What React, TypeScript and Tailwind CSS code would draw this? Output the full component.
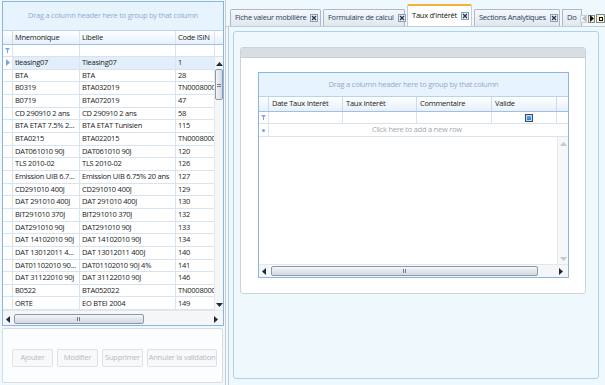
import React from "react";

const rows: [string, string, string][] = [
  ["tleasing07", "Tleasing07", "1"],
  ["BTA", "BTA", "28"],
  ["B0319", "BTA032019", "TN0008000000"],
  ["B0719", "BTA072019", "47"],
  ["CD 290910 2 ans", "CD 290910 2 ans", "58"],
  ["BTA ETAT 7.5% 2...", "BTA ETAT Tunisien", "115"],
  ["BTA0215", "BTA022015", "TN0008000000"],
  ["DAT061010 90J", "DAT061010 90J", "120"],
  ["TLS 2010-02", "TLS 2010-02", "126"],
  ["Emission UIB 6.7...", "Emission UIB 6.75% 20 ans", "127"],
  ["CD291010 400J", "CD291010 400J", "129"],
  ["DAT 291010 400J", "DAT 291010 400J", "130"],
  ["BIT291010 370J", "BIT291010 370J", "132"],
  ["DAT291010 90J", "DAT291010 90J", "133"],
  ["DAT 14102010 90J", "DAT 14102010 90J", "134"],
  ["DAT 13012011 4...", "DAT 13012011 400J", "140"],
  ["DAT01102010 90...", "DAT01102010 90J 4%", "141"],
  ["DAT 31122010 90J", "DAT 31122010 90J", "146"],
  ["B0522", "BTA052022", "TN0008000000"],
  ["ORTE", "EO BTEI 2004", "149"],
];

function Funnel() {
  return (
    <svg width="5" height="5" viewBox="0 0 5 5">
      <path d="M0 0H5L3 2.2V5H2V2.2Z" fill="#7fa6d6" />
    </svg>
  );
}

function Arrow({ dir, color = "#1e2b3c" }: { dir: "up" | "down" | "left" | "right"; color?: string }) {
  const d = {
    up: "M0 4L3.5 0L7 4Z",
    down: "M0 0L7 0L3.5 4Z",
    left: "M4 0V7L0 3.5Z",
    right: "M0 0V7L4 3.5Z",
  }[dir];
  const vertical = dir === "up" || dir === "down";
  return (
    <svg width={vertical ? 7 : 4} height={vertical ? 4 : 7} viewBox={vertical ? "0 0 7 4" : "0 0 4 7"}>
      <path d={d} fill={color} />
    </svg>
  );
}

function CloseBox() {
  return (
    <span className="inline-flex shrink-0 items-center justify-center w-[8px] h-[8px] border border-[#8e9db1] bg-[#eef2f7] ml-auto">
      <svg width="6" height="6" viewBox="0 0 6 6">
        <path d="M1 1L5 5M5 1L1 5" stroke="#1f3552" strokeWidth="1.3" />
      </svg>
    </span>
  );
}

function HScroll({ thumbLeft, thumbWidth, tall }: { thumbLeft: number; thumbWidth: number; tall?: boolean }) {
  return (
    <div
      className={`${tall ? "h-[15px] pt-[2px]" : "h-[13px]"} shrink-0 flex items-center bg-[#f4f6f8] border-t border-[#e3e8ee]`}
    >
      <div className="w-[10px] flex justify-center">
        <Arrow dir="left" />
      </div>
      <div className="flex-1 relative h-[10px]">
        <div
          className="absolute top-0 bottom-0 rounded-[2px] border border-[#8d99a8] bg-gradient-to-b from-[#f3f5f8] to-[#d3d9e1] flex items-center justify-center"
          style={{ left: thumbLeft, width: thumbWidth }}
        >
          <div className="w-[4px] h-[4px] bg-[repeating-linear-gradient(90deg,#6f7c8c_0,#6f7c8c_1px,transparent_1px,transparent_2px)]" />
        </div>
      </div>
      <div className="w-[14px] flex justify-center">
        <Arrow dir="right" />
      </div>
    </div>
  );
}

function LeftGrid() {
  const cell = "border-r border-[#d6e3f1] px-[2px] overflow-hidden whitespace-nowrap flex items-center";
  return (
    <div className="flex flex-col w-[222px] h-[325px] border border-[#8db4e0] bg-white">
      <div className="h-[29px] shrink-0 bg-[#e8f4fd] border-b border-[#b9d3ef] flex items-center justify-center text-[#8eaad0]">
        Drag a column header here to group by that column
      </div>
      <div className="h-[14px] shrink-0 flex border-b border-[#9fc0e6] bg-gradient-to-b from-white to-[#e6f0fb] text-[#1c1c1c]">
        <div className="w-[10px] border-r border-[#c9dbef]" />
        <div className={`w-[67px] ${cell} border-[#c9dbef]`}>Mnemonique</div>
        <div className={`w-[96px] ${cell} border-[#c9dbef]`}>Libelle</div>
        <div className={`w-[39px] ${cell} border-[#c9dbef]`}>Code ISIN</div>
        <div className="flex-1" />
      </div>
      <div className="h-[12px] shrink-0 flex border-b border-[#d6e3f1]">
        <div className="w-[10px] border-r border-[#d6e3f1] flex items-center justify-center">
          <Funnel />
        </div>
        <div className="w-[67px] border-r border-[#d6e3f1]" />
        <div className="w-[96px] border-r border-[#d6e3f1]" />
        <div className="w-[39px] border-r border-[#d6e3f1]" />
      </div>
      <div className="flex-1 flex min-h-0">
        <div className="w-[212px] overflow-hidden">
          {rows.map((r, i) => (
            <div
              key={i}
              className={`h-[12.67px] flex border-b border-[#d6e3f1] text-[#1a1a1a] ${i === 0 ? "bg-[#e2effb]" : ""}`}
            >
              <div className="w-[10px] shrink-0 border-r border-[#d6e3f1] flex items-center justify-center bg-white">
                {i === 0 && <Arrow dir="right" color="#7ea4d4" />}
              </div>
              <div className={`w-[67px] shrink-0 ${cell}`}>{r[0]}</div>
              <div className={`w-[96px] shrink-0 ${cell}`}>{r[1]}</div>
              <div className={`w-[39px] shrink-0 ${cell}`}>{r[2]}</div>
            </div>
          ))}
        </div>
        <div className="flex-1 flex flex-col items-center bg-[#f4f6f8] border-l border-[#e3e8ee]">
          <div className="h-[10px] flex items-center mt-[2px]">
            <Arrow dir="up" />
          </div>
          <div className="w-[8px] h-[31px] rounded-[2px] border border-[#8d99a8] bg-gradient-to-r from-[#f3f5f8] to-[#d3d9e1] flex items-center justify-center">
            <div className="w-[4px] h-[4px] bg-[repeating-linear-gradient(0deg,#6f7c8c_0,#6f7c8c_1px,transparent_1px,transparent_2px)]" />
          </div>
          <div className="flex-1" />
          <div className="h-[8px] flex items-center mb-[1px]">
            <Arrow dir="down" />
          </div>
        </div>
      </div>
      <HScroll thumbLeft={1} thumbWidth={130} tall />
    </div>
  );
}

function Button({ label, w }: { label: string; w: string }) {
  return (
    <div className={`${w} h-[18px] border border-[#dde2e8] rounded-[2px] bg-[#f7f9fb] text-[#b6bcc4] flex items-center justify-center whitespace-nowrap`}>
      {label}
    </div>
  );
}

function Tab({ label, selected, w }: { label: string; selected?: boolean; w: string }) {
  return (
    <div
      className={`${w} flex items-center gap-[4px] px-[4px] border border-b-0 rounded-t-[2px] whitespace-nowrap ${
        selected
          ? "h-[22px] bg-white border-[#c6ccd4] border-t-2 border-t-[#f4b13a] text-[#111]"
          : "h-[17px] bg-gradient-to-b from-[#f5f8fb] to-[#dfe7f0] border-[#a9b8ca] text-[#2c3e55]"
      }`}
    >
      <span>{label}</span>
      <CloseBox />
    </div>
  );
}

function InnerGrid() {
  const col = "border-r border-[#c9dbef] px-[3px] flex items-center whitespace-nowrap";
  return (
    <div className="w-[311px] h-[206px] flex flex-col border border-[#8db4e0] bg-white">
      <div className="h-[24px] shrink-0 bg-[#e8f4fd] border-b border-[#b9d3ef] flex items-center justify-center text-[#8eaad0]">
        Drag a column header here to group by that column
      </div>
      <div className="h-[15px] shrink-0 flex border-b border-[#9fc0e6] bg-gradient-to-b from-white to-[#e6f0fb] text-[#1c1c1c]">
        <div className="w-[10px] border-r border-[#c9dbef]" />
        <div className={`w-[74px] ${col}`}>Date Taux Interêt</div>
        <div className={`w-[74px] ${col}`}>Taux Interêt</div>
        <div className={`w-[75px] ${col}`}>Commentaire</div>
        <div className={`w-[65px] ${col}`}>Valide</div>
      </div>
      <div className="h-[12px] shrink-0 flex border-b border-[#d6e3f1]">
        <div className="w-[10px] border-r border-[#d6e3f1] flex items-center justify-center">
          <Funnel />
        </div>
        <div className="w-[74px] border-r border-[#d6e3f1]" />
        <div className="w-[74px] border-r border-[#d6e3f1]" />
        <div className="w-[75px] border-r border-[#d6e3f1]" />
        <div className="w-[65px] border-r border-[#d6e3f1] flex items-center pl-[33px]">
          <div className="w-[8px] h-[8px] border border-[#3c4c60] bg-[#c9d6e6] p-[1px]">
            <div className="w-full h-full bg-gradient-to-b from-[#63aef0] to-[#2f7fd0]" />
          </div>
        </div>
      </div>
      <div className="h-[13px] shrink-0 flex border-b border-[#d6e3f1]">
        <div className="w-[10px] border-r border-[#d6e3f1] flex items-center justify-center">
          <span className="w-[3px] h-[3px] rounded-full bg-[#7fa6d6]" />
        </div>
        <div className="flex-1 flex items-center pl-[103px] text-[#a3a8ae]">Click here to add a new row</div>
      </div>
      <div className="flex-1 flex min-h-0">
        <div className="w-[298px]" />
        <div className="flex-1 flex flex-col items-center bg-[#f6f7f9] border-l border-[#e6eaef]">
          <div className="h-[10px] flex items-center mt-[2px]">
            <Arrow dir="up" color="#c3c8cf" />
          </div>
          <div className="flex-1" />
          <div className="h-[8px] flex items-center mb-[1px]">
            <Arrow dir="down" color="#c3c8cf" />
          </div>
        </div>
      </div>
      <HScroll thumbLeft={2} thumbWidth={267} />
    </div>
  );
}

export default function App() {
  return (
    <div
      className="w-[605px] h-[385px] flex bg-[#eff9fd] overflow-hidden text-[7.5px] tracking-[-0.25px] leading-none"
      style={{ fontFamily: '"Open Sans", "Noto Sans", sans-serif' }}
    >
      <div className="w-[226px] shrink-0 border-r border-[#c8ced6] pt-[1px] pl-[2px] flex flex-col">
        <LeftGrid />
        <div className="mt-[2px] w-[221px] h-[55px] border border-[#d6dce3] rounded-[2px] bg-[#fbfdfe] flex gap-[4px] pt-[20px] pl-[9px]">
          <Button label="Ajouter" w="w-[41px]" />
          <Button label="Modifier" w="w-[41px]" />
          <Button label="Supprimer" w="w-[41px]" />
          <Button label="Annuler la validation" w="w-[70px]" />
        </div>
      </div>
      <div className="flex-1 flex flex-col min-w-0">
        <div className="h-[27px] shrink-0 flex items-end pl-[4px] gap-[2px] border-b border-[#c2cad4] relative">
          <Tab label="Fiche valeur mobilière" w="w-[91px]" />
          <Tab label="Formulaire de calcul" w="w-[82px]" />
          <Tab label="Taux d'intérêt" selected w="w-[65px]" />
          <Tab label="Sections Analytiques" w="w-[86px]" />
          <div className="w-[20px] h-[17px] overflow-hidden flex items-center pl-[4px] border border-b-0 border-[#a9b8ca] bg-gradient-to-b from-[#f5f8fb] to-[#dfe7f0] text-[#2c3e55] whitespace-nowrap">
            Do
          </div>
          <div className="absolute right-0 bottom-[3px] flex gap-[1px] items-center">
            <div className="w-[7px] h-[8px] border border-[#c9cfd6] bg-[#f3f5f7] flex items-center justify-center">
              <Arrow dir="left" color="#b9bec5" />
            </div>
            <div className="w-[7px] h-[8px] border border-[#7f8a98] bg-[#fbf3c8] flex items-center justify-center">
              <Arrow dir="right" color="#111" />
            </div>
            <div className="w-[9px] h-[9px] border border-[#7f8a98] bg-[#fbf3c8] flex items-center justify-center">
              <div className="w-[4px] h-[4px] border border-[#111]" />
            </div>
          </div>
        </div>
        <div className="flex-1 ml-[2px] border-l border-[#c2cad4] pt-[4px] pl-[4px] pr-[6px] pb-[6px] flex">
          <div className="flex-1 border border-[#a8d4f1] rounded-[3px] bg-[#eff9fd] pt-[15px] pl-[6px]">
            <div className="w-[346px] h-[247px] border border-[#cdd2d8] rounded-[3px] bg-white flex flex-col">
              <div className="h-[10px] shrink-0 bg-[#d9dde4] rounded-t-[2px] border-b border-[#c9cdd4]" />
              <div className="pt-[14px] pl-[17px]">
                <InnerGrid />
              </div>
            </div>
          </div>
        </div>
      </div>
    </div>
  );
}
